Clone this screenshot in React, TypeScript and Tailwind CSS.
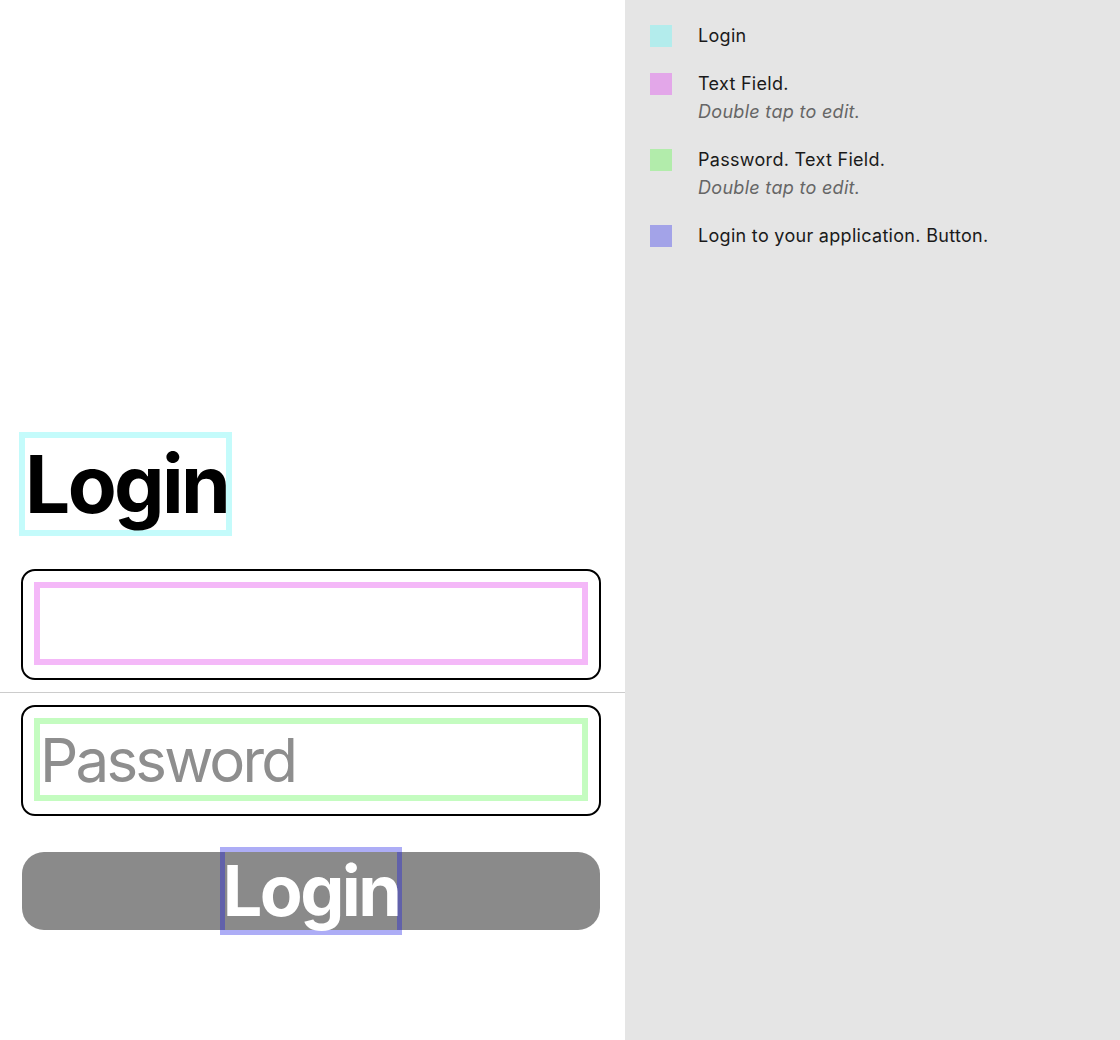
import React from 'react';

const legend = [
  { color: 'bg-[#b3ecec]', label: 'Login' },
  { color: 'bg-[#e3a7e9]', label: 'Text Field.', hint: 'Double tap to edit.' },
  { color: 'bg-[#b2ecab]', label: 'Password. Text Field.', hint: 'Double tap to edit.' },
  { color: 'bg-[#a3a3e8]', label: 'Login to your application. Button.' },
];

export default function App() {
  return (
    <div
      className="flex h-[1040px] w-[1120px] bg-white"
      style={{ fontFamily: 'Inter, "Noto Sans", sans-serif' }}
    >
      {/* Preview pane */}
      <div className="flex w-[625px] flex-col pt-[432px]">
        <div className="ml-[19px] flex h-[104px] w-[213px] items-center border-[6px] border-[#c4fbfb]">
          <h1 className="text-[80px] font-bold leading-[92px] tracking-[-2.6px] text-black">Login</h1>
        </div>

        <div className="ml-[21px] mt-[33px] h-[111px] w-[580px] rounded-[14px] border-[2.5px] border-black p-[11px]">
          <div className="h-[83px] w-[554px] border-[6px] border-[#f4b8f8]" />
        </div>

        <div className="mt-[12px] h-px w-full bg-[#cccccc]" />

        <div className="ml-[21px] mt-[12px] h-[111px] w-[580px] rounded-[14px] border-[2.5px] border-black p-[11px]">
          <div className="flex h-[83px] w-[554px] items-center border-[6px] border-[#c4fcc0]">
            <span className="text-[60px] leading-none tracking-[-2.8px] text-[#8e8e8e]">Password</span>
          </div>
        </div>

        <button className="relative ml-[22px] mt-[36px] flex h-[78px] w-[578px] items-center justify-center rounded-[22px] bg-[#8a8a8a]">
          <span className="flex h-[88px] w-[182px] items-center justify-center border-[5px] border-[rgba(20,20,230,0.35)] text-[70px] font-bold leading-none tracking-[-2.6px] text-white">
            Login
          </span>
        </button>
      </div>

      {/* Accessibility legend */}
      <div className="flex flex-1 flex-col gap-[20px] bg-[#e5e5e5] pl-[25px] pt-[22px]">
        {legend.map((item) => (
          <div key={item.label} className="flex items-start gap-[26px]">
            <div className={`mt-[3px] h-[22px] w-[22px] ${item.color}`} />
            <div className="flex flex-col text-[18px] leading-[28px] tracking-[0.3px]">
              <span className="text-[#1a1a1a]">{item.label}</span>
              {item.hint && <span className="italic text-[#666666]">{item.hint}</span>}
            </div>
          </div>
        ))}
      </div>
    </div>
  );
}
